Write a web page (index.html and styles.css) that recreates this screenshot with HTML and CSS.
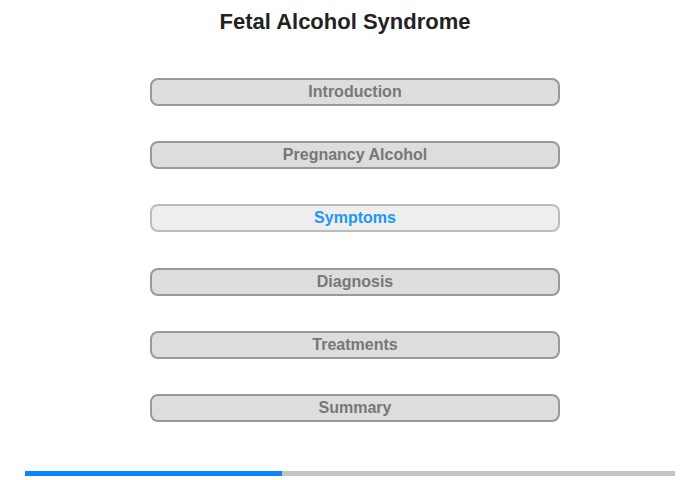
FILE: index.html
```html
<!DOCTYPE html>
<html>
<head>
<meta charset="utf-8">
<link rel="stylesheet" href="styles.css">
</head>
<body>
<div class="page">
  <h1 class="title">Fetal Alcohol Syndrome</h1>
  <nav class="menu">
    <div class="btn">Introduction</div>
    <div class="btn">Pregnancy Alcohol</div>
    <div class="btn active">Symptoms</div>
    <div class="btn">Diagnosis</div>
    <div class="btn">Treatments</div>
    <div class="btn">Summary</div>
  </nav>
  <div class="progress"><div class="fill" style="width:257px"></div></div>
</div>
</body>
</html>
```
FILE: styles.css
```css
html, body { margin: 0; padding: 0; background: #fff; }
.page {
  width: 700px; height: 480px;
  font-family: "Liberation Sans", Arial, sans-serif;
  display: flex; flex-direction: column;
}
.title {
  margin: 9px 0 0 0;
  width: 690px;
  text-align: center;
  font-size: 22px;
  line-height: 26px;
  font-weight: bold;
  color: #222;
}
.menu {
  margin: 43px 0 0 150px;
  width: 410px;
  display: flex; flex-direction: column;
  gap: 35.2px;
}
.btn {
  box-sizing: border-box;
  height: 28px;
  border: 2px solid #999;
  border-radius: 8px;
  background: #ddd;
  color: #777;
  font-size: 16px;
  font-weight: bold;
  line-height: 24px;
  text-align: center;
}
.btn.active {
  background: #eee;
  border-color: #bbb;
  color: #2196f3;
}
.progress {
  margin: 49px 0 0 25px;
  width: 650px; height: 5px;
  background: #c4c4c4;
}
.fill { height: 100%; background: #0a84ff; }
```
